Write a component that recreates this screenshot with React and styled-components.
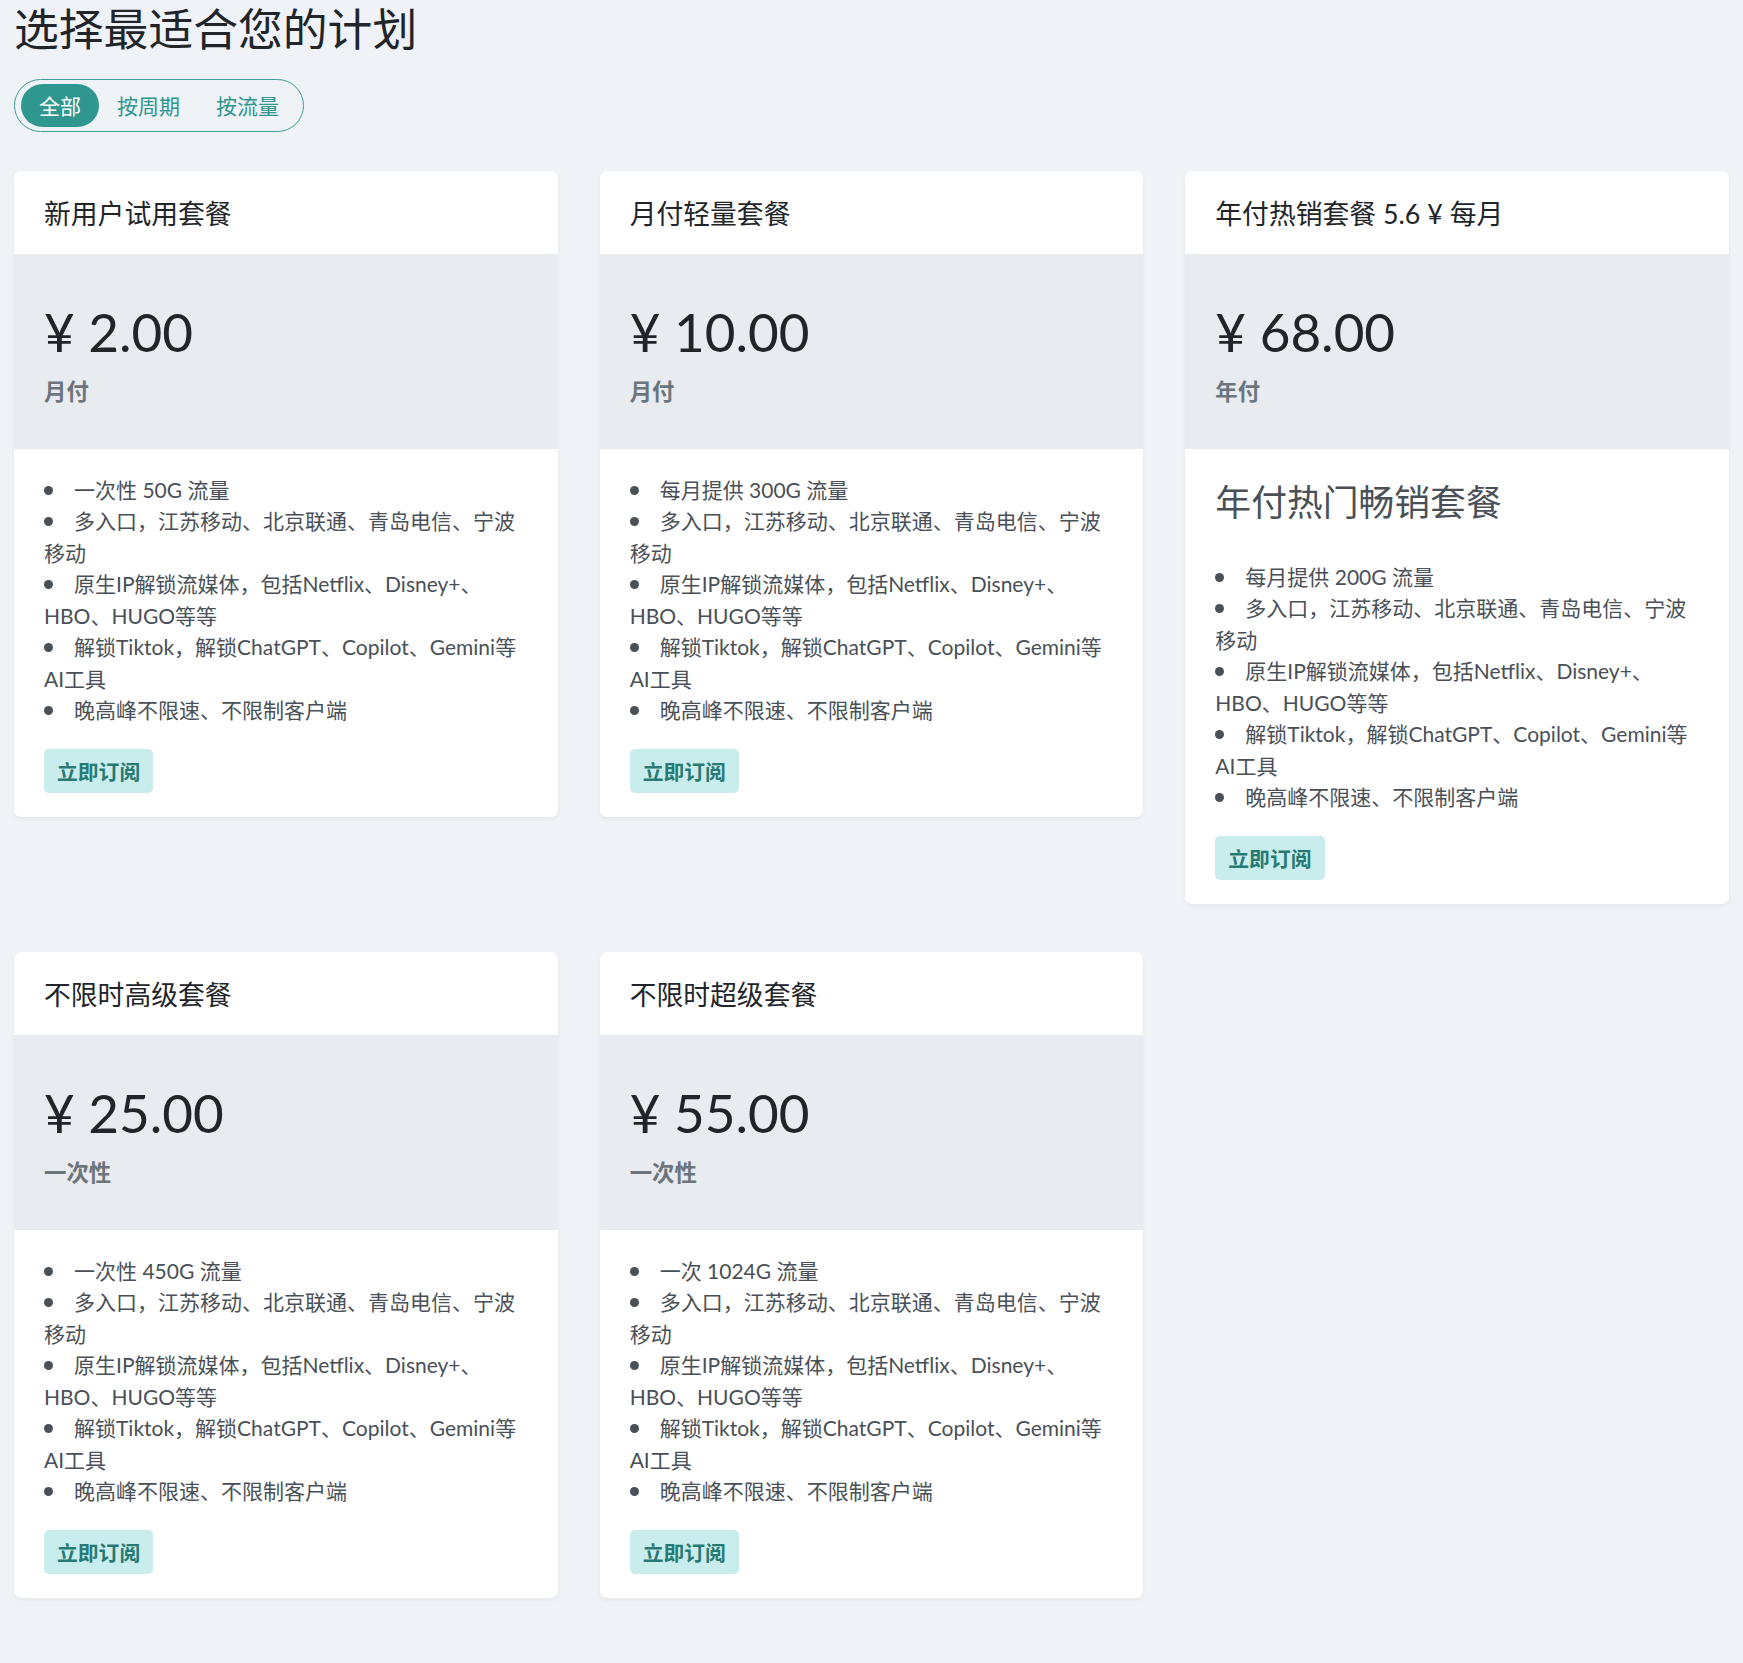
import { useState } from "react";
import styled, { createGlobalStyle } from "styled-components";

const features = (traffic) => [
  traffic,
  "多入口，江苏移动、北京联通、青岛电信、宁波移动",
  "原生IP解锁流媒体，包括Netflix、Disney+、HBO、HUGO等等",
  "解锁Tiktok，解锁ChatGPT、Copilot、Gemini等AI工具",
  "晚高峰不限速、不限制客户端",
];

const plans = [
  { id: 1, name: "新用户试用套餐", price: "2.00", cycle: "月付", items: features("一次性 50G 流量") },
  { id: 2, name: "月付轻量套餐", price: "10.00", cycle: "月付", items: features("每月提供 300G 流量") },
  {
    id: 3,
    name: "年付热销套餐 5.6 ¥ 每月",
    price: "68.00",
    cycle: "年付",
    subtitle: "年付热门畅销套餐",
    items: features("每月提供 200G 流量"),
  },
  { id: 4, name: "不限时高级套餐", price: "25.00", cycle: "一次性", items: features("一次性 450G 流量") },
  { id: 5, name: "不限时超级套餐", price: "55.00", cycle: "一次性", items: features("一次 1024G 流量") },
];

const tabs = ["全部", "按周期", "按流量"];

const App = () => {
  const [tab, setTab] = useState("全部");
  return (
    <>
      <GlobalStyle />
      <Page>
        <Title>选择最适合您的计划</Title>
        <TabGroup>
          {tabs.map((t) => (
            <Tab key={t} $active={tab === t} onClick={() => setTab(t)}>
              {t}
            </Tab>
          ))}
        </TabGroup>
        <CardGrid>
          {plans.map((plan) => (
            <Card key={plan.id}>
              <CardHeader>{plan.name}</CardHeader>
              <PriceBand>
                <Price>¥ {plan.price}</Price>
                <Cycle>{plan.cycle}</Cycle>
              </PriceBand>
              <CardBody>
                {plan.subtitle ? <Subtitle>{plan.subtitle}</Subtitle> : null}
                <FeatureList>
                  {plan.items.map((item) => (
                    <Feature key={item}>{item}</Feature>
                  ))}
                </FeatureList>
                <SubscribeButton>立即订阅</SubscribeButton>
              </CardBody>
            </Card>
          ))}
        </CardGrid>
      </Page>
    </>
  );
};
export default App;

const GlobalStyle = createGlobalStyle`
  body {
    margin: 0;
    background: #eff2f7;
    font-family: Lato, "Noto Sans CJK SC", sans-serif;
    color: #212529;
  }
`;
const Page = styled.div`
  padding: 0 14px 60px;
`;
const Title = styled.h1`
  margin: 3px 0 0;
  font-size: 44.8px;
  font-weight: 400;
  line-height: 1.2;
  color: #212529;
`;
const TabGroup = styled.div`
  display: inline-flex;
  align-items: center;
  margin-top: 22px;
  padding: 4px 6px;
  border: 1px solid #3f9f99;
  border-radius: 27px;
`;
const Tab = styled.button`
  height: 43px;
  padding: 0 18px;
  border: none;
  border-radius: 22px;
  font-family: inherit;
  font-size: 21px;
  cursor: pointer;
  color: ${(p) => (p.$active ? "#ffffff" : "#2f9690")};
  background: ${(p) => (p.$active ? "#2f9690" : "transparent")};
`;
const CardGrid = styled.div`
  display: grid;
  grid-template-columns: repeat(3, 1fr);
  column-gap: 42px;
  row-gap: 48px;
  align-items: start;
  margin-top: 39px;
`;
const Card = styled.article`
  background: #ffffff;
  border-radius: 7px;
  overflow: hidden;
  box-shadow: 0 2px 4px rgba(0, 0, 0, 0.05);
`;
const CardHeader = styled.header`
  display: flex;
  align-items: center;
  height: 83px;
  padding: 0 30px;
  font-size: 26.8px;
  color: #212529;
`;
const PriceBand = styled.div`
  padding: 46px 30px 42.5px;
  background: #e8ebef;
`;
const Price = styled.div`
  font-size: 53px;
  line-height: 1.2;
  color: #212529;
`;
const Cycle = styled.div`
  margin-top: 16px;
  font-size: 22.4px;
  font-weight: 700;
  line-height: 1.2;
  color: #6c757d;
`;
const CardBody = styled.div`
  padding: 25px 30px 24px;
`;
const Subtitle = styled.h2`
  margin: 8px 0 36px;
  font-size: 35.8px;
  font-weight: 400;
  line-height: 1.2;
  color: #495057;
`;
const FeatureList = styled.ul`
  margin: 0 0 23px;
  padding: 0;
  list-style: none;
`;
const Feature = styled.li`
  font-size: 21px;
  line-height: 31.5px;
  color: #495057;
  &::before {
    content: "";
    display: inline-block;
    width: 9px;
    height: 9px;
    margin-right: 21px;
    border-radius: 50%;
    background: #495057;
    vertical-align: 3px;
  }
`;
const SubscribeButton = styled.button`
  height: 44px;
  padding: 0 13px;
  border: none;
  border-radius: 5px;
  background: #c9eded;
  color: #277a74;
  font-family: inherit;
  font-size: 20.8px;
  font-weight: 700;
  cursor: pointer;
`;
